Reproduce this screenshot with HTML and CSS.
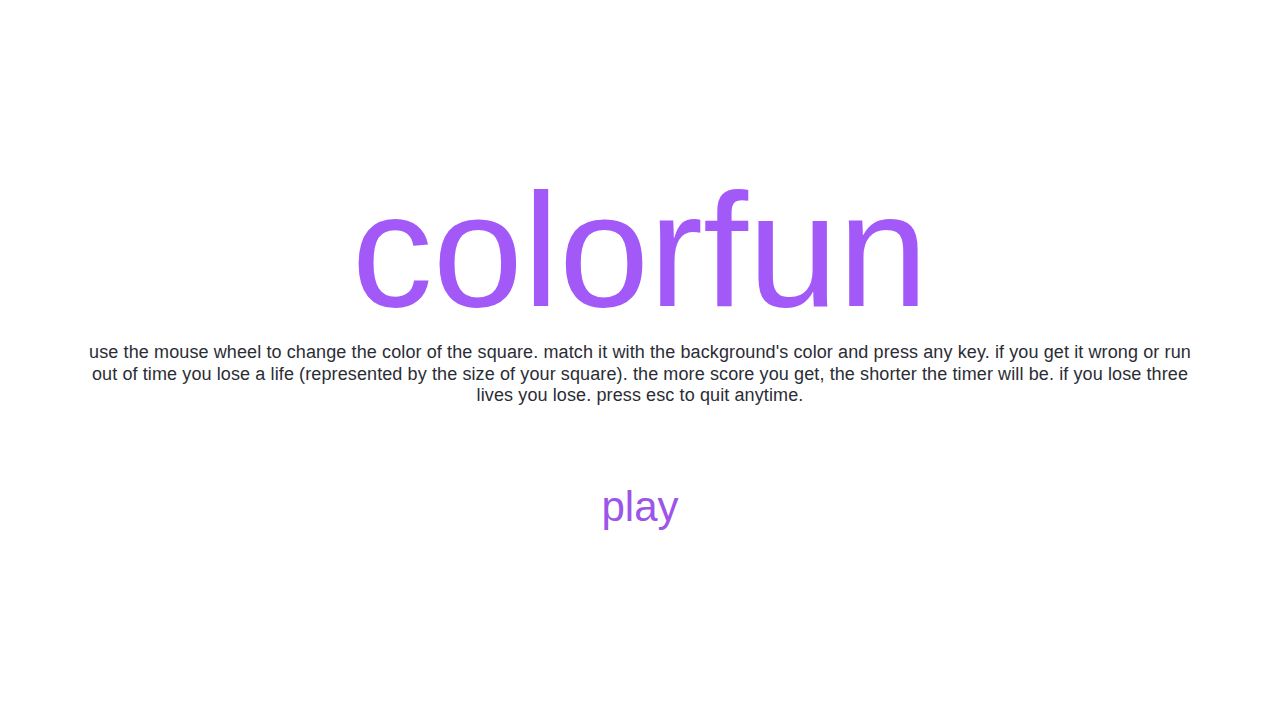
FILE: index.html
```html
<!DOCTYPE html>
<html lang="en">
<head>
    <meta charset="UTF-8">
    <meta name="viewport" content="width=device-width, initial-scale=1.0">
    <title>colorfun</title>
    <link rel="stylesheet" href="styles.css">
</head>
<body>
    <div class="menu">
        <h1 class="title">colorfun</h1>
        <p class="rules">use the mouse wheel to change the color of the square. match it with the background's color and press any key. if you get it wrong or run out of time you lose a life (represented by the size of your square). the more score you get, the shorter the timer will be. if you lose three lives you lose. press esc to quit anytime.</p>
        <a href="#" class="play">play</a>
    </div>
</body>
</html>
```

FILE: styles.css
```css
:root {
    --purple: #a259f7;
    --text-color: #2b2d35;
}

* {
    margin: 0;
    padding: 0;
    box-sizing: border-box;
    font-family: 'Liberation Sans', Arial, sans-serif;
}

body {
    background-color: white;
    min-height: 100vh;
}

.menu {
    display: flex;
    flex-direction: column;
    align-items: center;
    padding: 169px 84px 0;
}

.title {
    color: var(--purple);
    font-size: 162px;
    font-weight: normal;
    line-height: 1;
}

.rules {
    color: var(--text-color);
    font-size: 18px;
    line-height: 21.5px;
    letter-spacing: 0.11px;
    text-align: center;
    margin-top: 11px;
}

.play {
    color: #9c55e8;
    font-size: 42px;
    text-decoration: none;
    margin-top: 76px;
}
```
